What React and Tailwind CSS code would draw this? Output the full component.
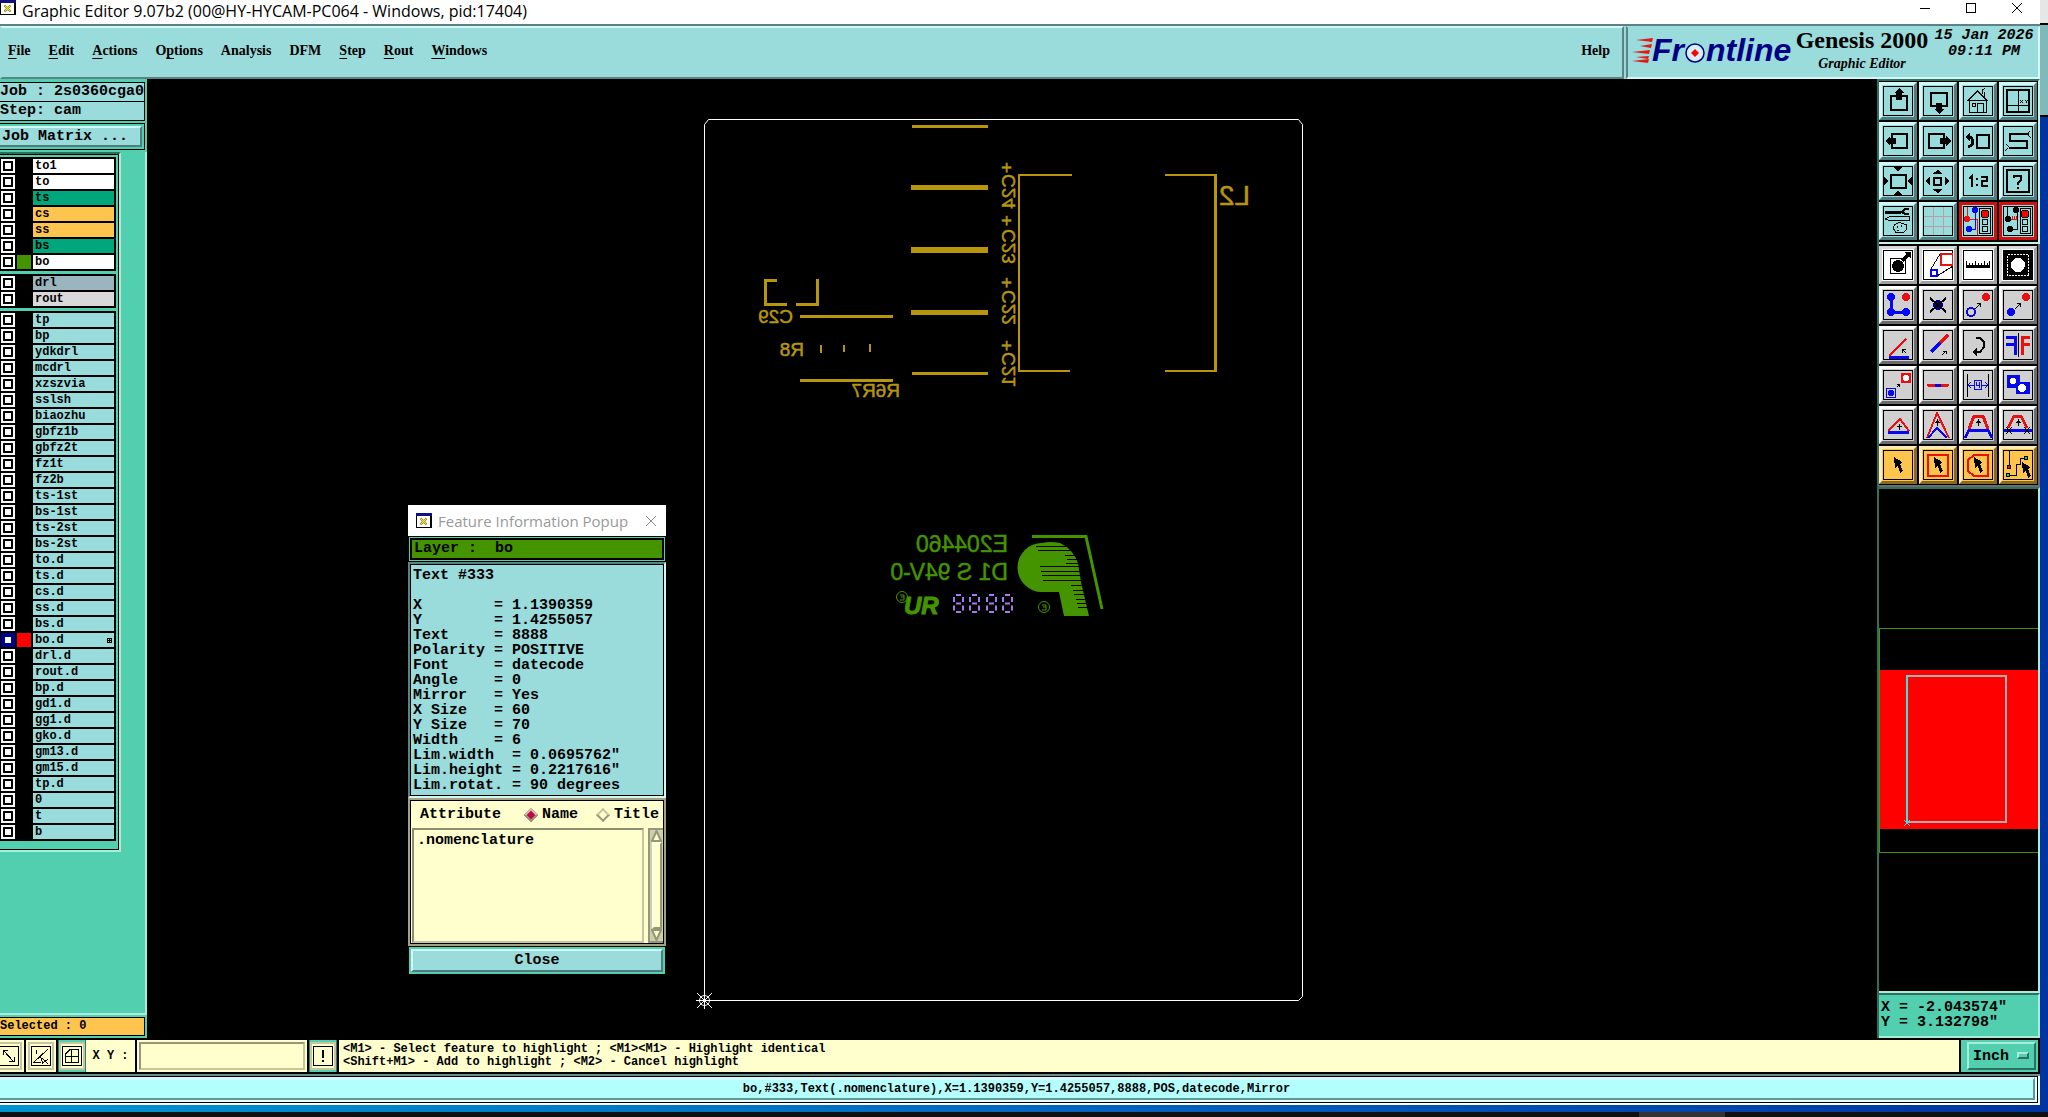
import { useState } from 'react';

const MENUS = [
  { label: 'File', key: 0 },
  { label: 'Edit', key: 0 },
  { label: 'Actions', key: 0 },
  { label: 'Options', key: 1 },
  { label: 'Analysis', key: -1 },
  { label: 'DFM', key: -1 },
  { label: 'Step', key: 0 },
  { label: 'Rout', key: 0 },
  { label: 'Windows', key: 0 },
];

const LAYER_GROUPS = [
  [
    { name: 'to1', bg: 'bg-white' },
    { name: 'to', bg: 'bg-white' },
    { name: 'ts', bg: 'bg-[#00a67c]' },
    { name: 'cs', bg: 'bg-[#fdc54e]' },
    { name: 'ss', bg: 'bg-[#fdc54e]' },
    { name: 'bs', bg: 'bg-[#00a67c]' },
    { name: 'bo', bg: 'bg-white', swatch: 'bg-[#449400]' },
  ],
  [
    { name: 'drl', bg: 'bg-[#9ab5bd]' },
    { name: 'rout', bg: 'bg-[#d9d9d9]' },
  ],
  [
    'tp', 'bp', 'ydkdrl', 'mcdrl', 'xzszvia', 'sslsh', 'biaozhu', 'gbfz1b', 'gbfz2t', 'fz1t', 'fz2b',
    'ts-1st', 'bs-1st', 'ts-2st', 'bs-2st', 'to.d', 'ts.d', 'cs.d', 'ss.d', 'bs.d', 'bo.d', 'drl.d',
    'rout.d', 'bp.d', 'gd1.d', 'gg1.d', 'gko.d', 'gm13.d', 'gm15.d', 'tp.d', '0', 't', 'b',
  ].map((name) => ({
    name,
    bg: 'bg-[#9adbdb]',
    swatch: name === 'bo.d' ? 'bg-[#ff0000]' : undefined,
    work: name === 'bo.d',
  })),
];

const FEATURE_INFO = `Text #333

X        = 1.1390359
Y        = 1.4255057
Text     = 8888
Polarity = POSITIVE
Font     = datecode
Angle    = 0
Mirror   = Yes
X Size   = 60
Y Size   = 70
Width    = 6
Lim.width  = 0.0695762"
Lim.height = 0.2217616"
Lim.rotat. = 90 degrees`;

const RED = '#e81010';
const BLUE = '#0808f0';

const line = (d, color = '#000', w = 1, extra = {}) => (
  <path d={d} fill="none" stroke={color} strokeWidth={w} {...extra} />
);

// Toolbar icons, all on a 30x30 grid
const VIEW_ICONS = [
  ['Pan up', <>
    {line('M8 10H24V24H8Z', '#000', 2)}
    <path d="M16 2L21 7H19V14H13V7H11Z" />
  </>],
  ['Pan down', <>
    {line('M8 7H24V20H8Z', '#000', 2)}
    <path d="M16 28L21 23H19V17H13V23H11Z" />
  </>],
  ['Home', <>
    {line('M4.5 15L14.5 5L24.5 15M6.5 14V26.5H23.5V14M5 14.5H24M19.5 8V4L22 2.5M21.5 11V6M9.5 17.5H12.5V20.5H9.5ZM14.5 26V17.5H20.5V26')}
  </>],
  ['XY window', <>
    {line('M4 4H26V26H4Z', '#000', 2)}
    {line('M15.5 4V26M4 19.5H26')}
    {line('M17 14L20 17M20 14L17 17M22 14L23.5 15.5L25 14M23.5 15.5V17')}
  </>],
  ['Pan left', <>
    {line('M9 8H24V22H9Z', '#000', 2)}
    <path d="M2 15L7 10V12H13V18H7V20Z" />
  </>],
  ['Pan right', <>
    {line('M6 8H21V22H6Z', '#000', 2)}
    <path d="M28 15L23 10V12H17V18H23V20Z" />
  </>],
  ['Previous view', <>
    {line('M14 9H26V22H14Z', '#000', 2)}
    {line('M5 11H8Q11 16 9 19L5 21', '#000', 3)}
    <path d="M2 11L7 7V15Z" />
  </>],
  ['Serpentine', <>
    {line('M26 8H7V15H24V22H6', '#000', 2)}
    {line('M24 8L27 5M25 9L28 12M6 21L3 18M5 22L2 25')}
  </>],
  ['Zoom out', <>
    {line('M8 9H23V22H8Z', '#000', 2)}
    <path d="M15 5L10 1H20ZM15 25L10 29H20ZM5 15L1 10V20ZM25 15L29 10V20Z" />
  </>],
  ['Zoom in', <>
    {line('M11 12H18V19H11Z', '#000', 2)}
    <path d="M15 4L9 8H20ZM15 27L9 23H20ZM3 15L7 10V20ZM26 15L22 10V20Z" />
  </>],
  ['Zoom 1:2', <>{line('M6 13L9 10V21M14 12V14M14 18V20M18 11H24V15H19V20H25', '#000', 2)}</>],
  ['Help on item', <>
    {line('M4 4H26V26H4Z', '#000', 2)}
    {line('M11 12V10H18V14L15 17V19M15 21V23', '#000', 2)}
  </>],
  ['Tools', <>
    {line('M2 6H18', '#000', 3)}
    {line('M26 3H22L19 6L22 8H26', '#000', 2)}
    {line('M2 13L7 10.5H26.5V14.5H7ZM12 18.5L16 16.5L23 18.5L24 23L20 27L13 26.5L10 22Z')}
    {line('M14 20V22M18 19V21M14 24H16')}
  </>],
  ['Grid', <>{line('M10.5 1V29M20.5 1V29M1 10.5H29M1 20.5H29', '#b8a0a8')}</>],
  ['Snap on', <>
    {line('M4.5 1V13.5H14.5V29', RED)}
    {line('M12.5 5V23.5H6', BLUE)}
    <circle cx="4" cy="13" r="3" fill={RED} /><circle cx="12" cy="4" r="3" fill={BLUE} /><circle cx="6" cy="23" r="3" fill={BLUE} />
    {line('M16.5 2.5H27.5V27.5H16.5Z')}
    <circle cx="22" cy="8" r="4" fill="#f00" stroke="#000" /><circle cx="22" cy="16" r="3" fill="none" stroke="#000" /><circle cx="22" cy="23" r="3" fill="none" stroke="#000" />
  </>, true],
  ['Snap off', <>
    {line('M4.5 1V13M14.5 5V23.5H8')}
    {line('M6 13.5H14M9.5 10V13M11.5 10V13M13.5 10V13', RED)}
    <circle cx="5" cy="13" r="3" /><circle cx="13" cy="4" r="3" /><circle cx="7" cy="23" r="3" />
    {line('M17.5 2.5H27.5V27.5H17.5Z')}
    <circle cx="22" cy="8" r="4" fill="#f00" stroke="#000" /><circle cx="22" cy="16" r="3" fill="none" stroke="#000" /><circle cx="22" cy="23" r="3" fill="none" stroke="#000" />
  </>, true],
];

const EDIT_ICONS = [
  ['Move', <>
    {line('M7.5 8.5H22.5V23.5H7.5Z')}
    <circle cx="15" cy="16" r="6" />
    {line('M19 11L25 5', '#000', 3)}
    <path d="M21 2H28V9Z" />
  </>],
  ['Scale', <>
    {line('M17 4L8 19M30 16L14 26', '#000', 1)}
    {line('M18 4H30V15H18Z', RED, 2)}
    {line('M8 20H14V26H8Z', BLUE, 2)}
  </>],
  ['Measure', <>
    <path d="M3 15H27V18H3Z" />
    {line('M3.5 11V15M6.5 13V15M9.5 13V15M12.5 11V15M15.5 13V15M18.5 13V15M21.5 11V15M24.5 13V15M26.5 11V15')}
  </>],
  ['Negative', <>
    <path d="M1 1H29V29H1Z" />
    {line('M4.5 4.5H25.5V25.5H4.5Z', '#fff', 1, { strokeDasharray: '2 1' })}
    <circle cx="15" cy="15" r="7" fill="#fff" />
  </>],
  ['Copy nodes', <>
    {line('M8 7V22H23', BLUE, 3)}
    <circle cx="8" cy="7" r="4" fill={BLUE} /><circle cx="8" cy="22" r="4" fill={BLUE} /><circle cx="23" cy="22" r="4" fill={BLUE} /><circle cx="23" cy="7" r="4" fill={RED} />
  </>],
  ['Delete', <>
    <circle cx="15" cy="15" r="5" fill="#000090" />
    {line('M7 8L23 22M23 8L7 22', '#000', 2)}
  </>],
  ['Move node', <>
    <circle cx="8" cy="22" r="4" fill="none" stroke={BLUE} strokeWidth="2" /><circle cx="23" cy="7" r="4" fill={RED} />
    {line('M12 19L18 13M14 13.5H17.5V17')}
  </>],
  ['Copy node', <>
    <circle cx="8" cy="22" r="4" fill={BLUE} /><circle cx="23" cy="7" r="4" fill={RED} />
    {line('M12 19L18 13M14 13.5H17.5V17')}
  </>],
  ['Rotate', <>
    {line('M6 26L23 9', RED, 2)}
    {line('M6 27H26', BLUE, 3)}
    {line('M19 19L23 23M19.5 23V19.5H23')}
  </>],
  ['Stretch', <>
    {line('M17 13L25 5', RED, 3)}
    {line('M8 22L17 13', BLUE, 3)}
    {line('M19 25L23 21M20 21.5H23.5V24')}
  </>],
  ['Turn', <>
    {line('M13 8H17L21 12V17L17 22H12', '#000', 2)}
    <path d="M9 22L14 18V26Z" />
  </>],
  ['Mirror', <>
    {line('M3 7H12V25M3 14H12', BLUE, 3)}
    {line('M27 7H19V25M27 14H19', RED, 3)}
    {line('M15.5 3V27')}
  </>],
  ['Resize pad', <>
    {line('M3.5 18.5H12.5V27.5H3.5Z', BLUE)}
    <circle cx="8" cy="23" r="3" fill={BLUE} />
    <path d="M18 3H28V13H18Z" fill={RED} /><circle cx="23" cy="8" r="3" fill="#fff" />
    {line('M14 17L17 14M14 14.5H16.5V17')}
  </>],
  ['Break', <>
    {line('M5 15H25', RED, 3, { strokeLinecap: 'round' })}
    {line('M12 15H18', BLUE, 3)}
  </>],
  ['Spacing', <>
    {line('M4.5 4V27M25.5 4V27')}
    {line('M5 15.5H11M8 12L5 15L8 18M19 15.5H25M22 12L25 15L22 18M11.5 10.5H18.5V19.5H11.5ZM13.5 12V15.5H16.5M16.5 12V18', BLUE)}
  </>],
  ['Substitute', <>
    <path d="M4 5H17V12H27V24H13V18H4Z" fill={BLUE} />
    <circle cx="10" cy="11" r="3" fill="#fff" /><circle cx="19" cy="18" r="4" fill="#fff" />
  </>],
  ['Flatten', <>
    {line('M5 21L17 9L26 21', RED, 2)}
    {line('M5 22H26', BLUE, 3)}
    {line('M16.5 20V14M14 16.5H19')}
  </>],
  ['Peak', <>
    {line('M4 28L14 3L26 28', RED, 2)}
    {line('M5 28L14 18L24 28', BLUE, 2)}
    {line('M14.5 16V9M12 12.5H17M13 11.5H16')}
  </>],
  ['Chamfer', <>
    {line('M6 19L11 6H20L25 19', RED, 3)}
    {line('M2 28L6 20H25L29 28', BLUE, 3)}
    {line('M15.5 16V9M13 12.5H18M14 11.5H17')}
  </>],
  ['Extend', <>
    {line('M5 18L11 6H18L24 18', RED, 3)}
    {line('M1 20H29', BLUE, 3)}
    {line('M15.5 16V9M13 12.5H18M14 11.5H17M3 17L9 24M9 17L3 24M21 17L27 24M27 17L21 24')}
  </>],
];

const cursor = (x, y) => (
  <path transform={`translate(${x} ${y})`} d="M0 0L8 5L6 7L9 14L6 16L4 9L1 11Z" />
);

const SELECT_ICONS = [
  ['Select', cursor(11, 7)],
  ['Select frame', <>{line('M5 5H25V26H5Z', RED, 2)}{cursor(11, 7)}</>],
  ['Select polygon', <>{line('M11 5H25V26H11L5 21V10Z', RED, 2)}{cursor(11, 7)}</>],
  ['Select net', <>
    {line('M6.5 1V17M7 25.5H13.5V14.5H17.5V8.5H22')}
    <circle cx="6" cy="17" r="2" fill={RED} stroke="#000" /><circle cx="5" cy="25" r="2" fill="#20e020" stroke="#000" /><circle cx="23" cy="8" r="2" fill="#20e020" stroke="#000" />
    {cursor(19, 12)}
  </>],
];

const TONES = {
  teal: 'bg-[#9adbdb] border-t-[#d4f7f7] border-l-[#d4f7f7] border-b-[#4f7c7e] border-r-[#4f7c7e]',
  white: 'bg-white border-t-[#d8d8d8] border-l-[#d8d8d8] border-b-[#a0a0a0] border-r-[#a0a0a0]',
  gray: 'bg-[#d0d0d0] border-t-white border-l-white border-b-[#6c6c6c] border-r-[#6c6c6c]',
  gold: 'bg-[#fdc54e] border-t-[#ffebb8] border-l-[#ffebb8] border-b-[#8a6a22] border-r-[#8a6a22]',
  red: 'bg-[#9adbdb] border-[#d01010]',
};

function ToolButton({ label, tone, children }) {
  return (
    <button type="button" aria-label={label} className={`flex size-[38px] items-center justify-center border-[3px] ${TONES[tone]}`}>
      <svg viewBox="0 0 30 30" className="size-[30px] shrink-0" shapeRendering="crispEdges">
        <rect x="0.5" y="0.5" width="29" height="29" fill="none" stroke="#000" />
        {children}
      </svg>
    </button>
  );
}

function WindowIcon() {
  return (
    <svg viewBox="0 0 16 15" className="h-[15px] w-4 shrink-0">
      <rect width="16" height="15" fill="#000" />
      <rect x="1" y="3" width="13" height="11" fill="#fff" />
      <rect x="0" y="0" width="16" height="3" fill="#101080" />
      <path d="M4.5 5.5L10.5 11.5M10.5 5.5L4.5 11.5" stroke="#444" strokeWidth="2" />
      <path d="M4.5 5.5L10.5 11.5M10.5 5.5L4.5 11.5" stroke="#f0e020" strokeWidth="1.3" />
    </svg>
  );
}

function TitleBar() {
  return (
    <div className="flex h-6 shrink-0 items-start justify-between bg-white">
      <div className="flex items-start gap-1.5">
        <WindowIcon />
        <h1 className="font-['Open_Sans',sans-serif] text-[16px] leading-[22px] font-normal text-black">
          Graphic Editor 9.07b2 (00@HY-HYCAM-PC064 - Windows, pid:17404)
        </h1>
      </div>
      <div className="flex">
        <button type="button" aria-label="Minimize" className="flex h-[15px] w-[46px] items-center justify-center">
          <svg width="10" height="10"><path d="M0 5.5H10" stroke="#000" /></svg>
        </button>
        <button type="button" aria-label="Maximize" className="flex h-[15px] w-[46px] items-center justify-center">
          <svg width="10" height="10"><rect x="0.5" y="0.5" width="9" height="9" fill="none" stroke="#000" /></svg>
        </button>
        <button type="button" aria-label="Close window" className="flex h-[15px] w-[46px] items-center justify-center">
          <svg width="10" height="10"><path d="M0 0L10 10M10 0L0 10" stroke="#000" /></svg>
        </button>
      </div>
    </div>
  );
}

function MenuBar() {
  return (
    <header className="flex h-[55px] shrink-0 border-t-2 border-[#5b8385] bg-[#9adbdb]">
      <nav className="flex flex-1 items-center justify-between border-2 border-t-[#d4f7f7] border-r-[#5b8385] border-b-[#5b8385] border-l-[#9adbdb] pr-3 pb-1 pl-1.5 font-['Liberation_Serif',serif] text-[14px] leading-[18px] font-bold">
        <div className="flex gap-[18px]">
          {MENUS.map((m) => (
            <button key={m.label} type="button">
              {m.key < 0 ? m.label : (
                <>
                  {m.label.slice(0, m.key)}
                  <span className="underline underline-offset-[3px]">{m.label[m.key]}</span>
                  {m.label.slice(m.key + 1)}
                </>
              )}
            </button>
          ))}
        </div>
        <button type="button">Help</button>
      </nav>
      <div className="ml-[2px] flex w-[414px] border-2 border-t-[#9adbdb] border-r-[#d4f7f7] border-b-[#d4f7f7] border-l-[#5b8385] pl-1">
        <Logo />
        <div className="flex w-[136px] flex-col items-center">
          <div className="font-['Liberation_Serif',serif] text-[24px] leading-6 font-bold whitespace-nowrap">Genesis 2000</div>
          <div className="font-['Liberation_Serif',serif] text-[14px] leading-6 font-bold italic">Graphic Editor</div>
        </div>
        <div className="flex-1 text-center font-['Liberation_Mono',monospace] text-[15px] leading-4 font-bold whitespace-pre italic">
          15 Jan 2026{'\n'}09:11 PM
        </div>
      </div>
    </header>
  );
}

function Logo() {
  return (
    <svg viewBox="0 0 162 48" className="h-12 w-[162px] shrink-0" role="img" aria-label="Frontline">
      <path d="M4 12L21 10L20 14ZM8 18L20 16L19 20ZM0 24L18 22L17 26ZM4 29L17 28L16 31ZM0 33L17 31L16 35Z" fill="#e81818" />
      <g fill="#000084" fontFamily="Liberation Sans, sans-serif" fontSize="32" fontWeight="bold" fontStyle="italic">
        <text x="20" y="33">Fr</text>
        <text x="74" y="33">ntline</text>
      </g>
      <circle cx="63" cy="25" r="9" fill="#d4f0f4" stroke="#000084" strokeWidth="1.5" />
      <path d="M63 21L67 25L63 29L59 25Z" fill="#f00" />
    </svg>
  );
}

function LayerRow({ layer }) {
  return (
    <li className="flex h-[14px] gap-[2px]">
      <label className={`flex size-[14px] items-center justify-center ${layer.work ? 'bg-[#000090]' : 'bg-white'}`}>
        <input
          type="checkbox"
          aria-label={layer.name}
          className={`size-[10px] appearance-none border-2 bg-white ${layer.work ? 'border-[#000090]' : 'border-black'}`}
        />
      </label>
      <span className={`size-[14px] ${layer.swatch || 'bg-black'}`} />
      <button type="button" className={`flex flex-1 items-center justify-between px-[2px] text-left leading-[14px] ${layer.bg}`}>
        {layer.name}
        {layer.work && (
          <svg width="5" height="5" shapeRendering="crispEdges"><path d="M0 .5H5M0 2.5H5M0 4.5H5M.5 0V5M2.5 0V5M4.5 0V5" stroke="#000" /></svg>
        )}
      </button>
    </li>
  );
}

function LayerPanel() {
  return (
    <aside className="flex w-[147px] shrink-0 flex-col bg-[#52cfae] pt-[3px]">
      <div className="mr-[2px] border border-l-0 border-black bg-[#9adbdb] text-[15px] leading-[18px] whitespace-pre">Job : 2s0360cga0</div>
      <div className="mr-[2px] border border-t-0 border-l-0 border-black bg-[#9adbdb] text-[15px] leading-[18px] whitespace-pre">Step: cam</div>
      <div className="mt-[2px] mr-[2px] border border-l-0 border-black py-[2px] pr-[2px]">
        <button type="button" className="block w-full border-2 border-l-0 border-t-[#d4f7f7] border-r-[#4f7c7e] border-b-[#4f7c7e] bg-[#9adbdb] pl-[2px] text-left text-[15px] leading-[17px]">
          Job Matrix ...
        </button>
      </div>
      <div className="mt-[2px] flex flex-1 flex-col border-r-2 border-b-2 border-[#a9ecd9] text-[12px]">
        <div className="mr-[24px] border-t-2 border-r-2 border-b-2 border-t-[#2f6f5d] border-r-[#a9ecd9] border-b-[#a9ecd9]">
          <div className="flex flex-col gap-[3px] border-t border-r border-b border-black pt-[2px] pr-[2px] pb-[8px]">
            {LAYER_GROUPS.map((group, i) => (
              <ul key={i} className="flex flex-col gap-[2px] bg-black py-[2px] pr-[2px] pl-px">
                {group.map((layer) => <LayerRow key={layer.name} layer={layer} />)}
              </ul>
            ))}
          </div>
        </div>
      </div>
      <div className="mt-[2px] mr-[2px] mb-[2px] border border-l-0 border-black bg-[#fdc54e] text-[12px] leading-[17px]">Selected : 0</div>
    </aside>
  );
}

const GOLD = '#b8960c';
const GREEN = '#449400';

// Bottom side text, seen from the top: flipped about its right end
function Flipped({ x, y, size = 19, fill = GOLD, children }) {
  return <text transform={`translate(${x} ${y}) scale(-1 1)`} fontSize={size} fill={fill}>{children}</text>;
}

function Vertical({ x, y, children }) {
  return <text transform={`matrix(0 1 1 0 ${x} ${y})`} fontSize="19" fill={GOLD}>{children}</text>;
}

function Digit({ x }) {
  return (
    <path
      d={`M${x + 3} 595h5M${x + 3} 603.5h5M${x + 3} 612h5M${x + 1} 597v5M${x + 10} 597v5M${x + 1} 605.5v5M${x + 10} 605.5v5`}
      stroke="#a878f0" strokeWidth="2" fill="none"
    />
  );
}

function BoardDrawing() {
  return (
    <svg className="absolute inset-0 size-full" fontFamily="Liberation Sans, sans-serif" fontWeight="normal">
      <g transform="translate(-147 -79)">
        <path d="M704.5 124.5L708.5 119.5H1298.5L1302.5 124.5V996.5L1298.5 1000.5H704.5Z" fill="none" stroke="#fff" />
        <g stroke="#fff" fill="none">
          <circle cx="704.5" cy="1000.5" r="5" />
          <path d="M696 1000.5H713M704.5 992V1009M697 993L712 1008M712 993L697 1008" />
        </g>

        <g stroke={GOLD} fill="none" shapeRendering="crispEdges">
          <path d="M912 126.5H988M912 373.5H988" strokeWidth="3" />
          <path d="M911 187.5H988M911 312.5H988" strokeWidth="5" />
          <path d="M911 250H988" strokeWidth="6" />
          <path d="M1072 175H1019V371H1070" strokeWidth="2" />
          <path d="M1165 175H1215.5M1215.5 371H1165" strokeWidth="2" />
          <path d="M1215.5 174V372" strokeWidth="3" />
          <path d="M777 280.5H765.5V304.5H787M796 304.5H817.5V279" strokeWidth="3" />
          <path d="M800 316.5H893M800 380.5H893" strokeWidth="3" />
          <path d="M821 345V353M844 345V352M870 344V352" strokeWidth="2" />
        </g>
        <g stroke={GOLD} strokeWidth="0.5">
          <Flipped x={793} y={323}>C29</Flipped>
          <Flipped x={804} y={356}>R8</Flipped>
          <Flipped x={900} y={397}>R6R7</Flipped>
          <Flipped x={1250} y={205} size={28}>L2</Flipped>
          {[['C24', 162, 174], ['C23', 215, 229], ['C22', 277, 290], ['C21', 340, 352]].map(([ref, plus, y]) => (
            <g key={ref}>
              <Vertical x={1013} y={plus}>+</Vertical>
              <Vertical x={1015} y={y}>{ref}</Vertical>
            </g>
          ))}
        </g>

        <g stroke={GREEN} strokeWidth="0.5">
          <Flipped x={1008} y={552} size={23} fill={GREEN}>E204460</Flipped>
          <Flipped x={1008} y={580} size={23} fill={GREEN}>D1 S 94V-0</Flipped>
        </g>
        {[953, 969, 986, 1002].map((x) => <Digit key={x} x={x} />)}

        {/* recognized component mark */}
        <text x="904" y="614" fontSize="24" fontWeight="bold" fontStyle="italic" fill={GREEN} stroke={GREEN}>UR</text>
        <g stroke={GREEN} fill="none">
          <circle cx="902" cy="597" r="5.5" />
          <path d="M900 595H904V600H900M904 597H901" />
          <circle cx="1044" cy="607" r="5.5" />
          <path d="M1042 605H1046V610H1042M1046 607H1043" />
        </g>

        {/* Maker logo */}
        <path d="M1042 543Q1050 541 1060 543Q1073 549 1078 563L1081 582L1089 616H1064L1059 592H1042A24.5 24.5 0 0 1 1042 543Z" fill={GREEN} />
        <path d="M1032 536.5H1086L1102 609" fill="none" stroke={GREEN} strokeWidth="3" />
        <path
          d="M1036 546.5H1068M1038 550.5H1072M1065 555.5H1076M1067 559.5H1078M1066 563.5H1079M1040 566.5H1080M1041 571.5H1081M1042 575.5H1081M1043 580.5H1082M1071 585.5H1083M1073 590.5H1085M1074 594.5H1086M1076 599.5H1087M1077 603.5H1087M1078 607.5H1088"
          stroke="#000" fill="none"
        />
      </g>
    </svg>
  );
}

function FeaturePopup() {
  const [show, setShow] = useState('name');
  const radios = [{ id: 'name', label: 'Name' }, { id: 'title', label: 'Title' }];
  return (
    <section className="absolute top-[426px] left-[261px] w-[258px] bg-[#52cfae] text-[15px] leading-[15px]">
      <div className="flex h-[31px] items-center gap-1.5 bg-white px-2">
        <WindowIcon />
        <h2 className="flex-1 font-['Open_Sans',sans-serif] text-[15px] leading-5 font-normal whitespace-nowrap text-[#999]">Feature Information Popup</h2>
        <button type="button" aria-label="Close popup" className="mr-px">
          <svg width="12" height="12"><path d="M1 1L11 11M11 1L1 11" stroke="#888" /></svg>
        </button>
      </div>
      <div className="border border-black p-px">
        <div className="border-2 border-black bg-[#449400] pl-[2px] leading-[18px] whitespace-pre">Layer :  bo</div>
      </div>
      <div className="border-2 border-t-[#5b8385] border-r-[#d4f7f7] border-b-[#d4f7f7] border-l-[#5b8385]">
        <pre className="border border-black bg-[#9adbdb] px-[2px] pt-[3px] pb-[2px] font-['Liberation_Mono',monospace]">{FEATURE_INFO}</pre>
      </div>
      <div className="border-2 border-[#a3a383] bg-[#ffffce]">
        <div className="border border-black">
          <fieldset className="flex h-[27px] items-center pr-1 pl-[9px]">
            <span className="flex-1">Attribute</span>
            {radios.map((r) => (
              <label key={r.id} className="ml-4 flex items-center gap-1.5 last:ml-5">
                <input
                  type="radio"
                  name="show"
                  checked={show === r.id}
                  onChange={() => setShow(r.id)}
                  className="size-[10px] rotate-45 appearance-none border-2 border-t-[#c5c5a0] border-l-[#c5c5a0] border-r-[#96967a] border-b-[#96967a] bg-[#ffffce] checked:bg-[#c8004c]"
                />
                {r.label}
              </label>
            ))}
          </fieldset>
          <div className="flex h-[115px]">
            <ul className="ml-px flex-1 border-2 border-t-[#8d8d6f] border-r-[#c5c5a0] border-b-[#c5c5a0] border-l-[#8d8d6f] px-[3px] py-[3px]">
              <li>.nomenclature</li>
            </ul>
            <div className="ml-1 flex w-[15px] flex-col items-center justify-between border-2 border-r-0 border-[#96967a] bg-[#cfcfa8]">
              <svg width="11" height="12"><path d="M5.5 1L10 11H1Z" fill="#ffffce" stroke="#96967a" strokeWidth="2" /></svg>
              <div className="w-[10px] flex-1 border-2 border-[#ffffe8] border-r-[#96967a] border-b-[#96967a] bg-[#ffffce]" />
              <svg width="11" height="12"><path d="M5.5 11L10 1H1Z" fill="#ffffce" stroke="#96967a" strokeWidth="2" /></svg>
            </div>
          </div>
        </div>
      </div>
      <div className="border border-black p-[2px]">
        <button type="button" className="block w-full border-2 border-t-[#d4f7f7] border-r-[#4f7c7e] border-b-[#4f7c7e] border-l-[#d4f7f7] bg-[#9adbdb] leading-[19px]">
          Close
        </button>
      </div>
    </section>
  );
}

function Toolbar() {
  return (
    <aside className="flex w-[163px] shrink-0 flex-col border-l-2 border-[#2f6f5d]">
      <div className="border-t-2 border-r-2 border-b-2 border-t-[#2f6f5d] border-r-[#c5f3e8] border-b-[#c5f3e8]">
        <div className="grid grid-cols-[repeat(4,38px)] gap-[2px] bg-black pt-px pb-[2px]">
          {VIEW_ICONS.map(([label, icon, armed]) => (
            <ToolButton key={label} label={label} tone={armed ? 'red' : 'teal'}>{icon}</ToolButton>
          ))}
        </div>
      </div>
      <div className="border-r-2 border-b-2 border-[#6c6c6c]">
        <div className="grid grid-cols-[repeat(4,38px)] gap-[2px] bg-black pt-[2px] pb-px">
          {EDIT_ICONS.map(([label, icon], i) => (
            <ToolButton key={label} label={label} tone={i < 4 ? 'white' : 'gray'}>{icon}</ToolButton>
          ))}
          {SELECT_ICONS.map(([label, icon]) => (
            <ToolButton key={label} label={label} tone="gold">{icon}</ToolButton>
          ))}
        </div>
      </div>
      <Overview />
      <div className="border-t-2 border-r-2 border-b-2 border-t-[#2f6f5d] border-r-[#a9ecd9] border-b-[#a9ecd9] bg-[#52cfae] px-[2px] pt-[5px] pb-[6px] text-[15px] leading-[15px] whitespace-pre">
        X = -2.043574"{'\n'}Y = 3.132798"
      </div>
    </aside>
  );
}

function Overview() {
  return (
    <div className="relative min-h-0 flex-1 border-t-2 border-r-2 border-b-2 border-t-[#2f6f5d] border-r-[#a9ecd9] border-b-[#a9ecd9] bg-black">
      <svg className="absolute inset-0 size-full" shapeRendering="crispEdges">
        <rect x="0" y="181" width="160" height="159" fill="#ff0000" />
        <path d="M160 139.5H.5V363.5H160" fill="none" stroke="#449400" />
        <rect x="28" y="187" width="99" height="146" fill="none" stroke="#a8b0b0" strokeWidth="2" />
        <path d="M28 186V334" stroke="#40e0e0" strokeWidth="2" />
        <path d="M25 331L31 337M31 331L25 337" stroke="#40e0e0" />
      </svg>
    </div>
  );
}

function BarButton({ label, active, children }) {
  return (
    <div className={active ? 'border-x border-[#2f7f69] bg-[#52cfae] py-[2px]' : 'border-r-2 border-black p-[2px]'}>
      <button type="button" aria-label={label} className="flex h-full items-center justify-center border-2 border-[#c5c5a0] bg-[#ffffce] px-px">
        <svg width="20" height="20" shapeRendering="crispEdges" fill="none" stroke="#000">
          <rect x="0.5" y="0.5" width="19" height="19" />
          {children}
        </svg>
      </button>
    </div>
  );
}

function CommandBar() {
  return (
    <div className="-ml-1.5 flex h-[34px] shrink-0 border-b-2 border-black bg-[#ffffce]">
      <BarButton label="Absolute"><path d="M4 4L15 16M4.5 9V4.5H9M15.5 11V15.5H10" /></BarButton>
      <BarButton label="Angle"><path d="M2 17L17 3M3 16.5H10M5.5 4V8M11 12L17 18M12 17L17 13M8 10Q12 13 11 18" /></BarButton>
      <BarButton label="Grid snap" active><path d="M3.5 8L8 3.5H16.5V16.5H3.5ZM9.5 3V17M3 10.5H17" /></BarButton>
      <label htmlFor="xy" className="flex w-[49px] items-center justify-center text-[12px] whitespace-pre">X Y :</label>
      <div className="border-x-2 border-black p-[2px]">
        <input id="xy" type="text" className="h-full w-[166px] border-2 border-t-[#96967a] border-r-[#c5c5a0] border-b-[#c5c5a0] border-l-[#96967a] bg-[#ffffce] px-1 outline-none" />
      </div>
      <BarButton label="Alert" active><path d="M10 4V12M10 14V16" strokeWidth="2" /></BarButton>
      <div className="flex-1 border-l-2 border-black pt-[3px] pl-1 text-[12px] leading-[13px] whitespace-pre">
        {'<M1> - Select feature to highlight ; <M1><M1> - Highlight identical\n<Shift+M1> - Add to highlight ; <M2> - Cancel highlight'}
      </div>
      <div className="border-x-2 border-black bg-[#52cfae] py-[2px] pr-[2px] pl-1.5">
        <div className="relative h-full w-[69px] border-2 border-t-[#a9ecd9] border-r-[#2f6f5d] border-b-[#2f6f5d] border-l-[#a9ecd9]">
          <select aria-label="Units" className="size-full appearance-none pl-1 text-[15px] leading-6 outline-none">
            <option>Inch</option>
            <option>MM</option>
          </select>
          <span className="pointer-events-none absolute top-2 right-[5px] h-[7px] w-3 border-2 border-t-[#a9ecd9] border-r-[#2f6f5d] border-b-[#2f6f5d] border-l-[#a9ecd9]" />
        </div>
      </div>
    </div>
  );
}

export default function App() {
  return (
    <div className="flex h-screen flex-col overflow-hidden bg-[#101012] font-['Liberation_Mono',monospace] font-bold text-black">
      <div className="flex min-h-0 flex-1">
        <div className="flex min-w-0 flex-1 flex-col">
          <TitleBar />
          <MenuBar />
          <main className="flex min-h-0 flex-1 bg-black pb-[2px]">
            <LayerPanel />
            <div className="relative min-w-0 flex-1 overflow-hidden bg-black">
              <BoardDrawing />
              <FeaturePopup />
            </div>
            <Toolbar />
          </main>
          <CommandBar />
          <footer className="shrink-0 border-y-2 border-t-[#6b8f8c] border-b-white bg-[#e8ffff] pr-[2px]">
            <div className="border-y border-r border-black pr-[2px] pb-[2px]">
              <div className="border-t-[3px] border-r-2 border-b-2 border-t-[#d4fcfc] border-r-[#5f9896] border-b-[#5f9896] bg-[#b4fefe] text-center text-[12px] leading-[18px]">
                bo,#333,Text(.nomenclature),X=1.1390359,Y=1.4255057,8888,POS,datecode,Mirror
              </div>
            </div>
          </footer>
        </div>
        {/* sliver of the window and desktop behind */}
        <div className="flex w-2 shrink-0 flex-col bg-[#0034a0]">
          <div className="h-[23px] bg-[#e6e6e6]" />
          <div className="h-[94px] border-y-2 border-black bg-[#7fb9b9]" />
        </div>
      </div>
      <div className="h-[7px] shrink-0 bg-linear-to-r from-[#0095d0] via-[#0068c0] to-[#0034a0]" />
      <div className="flex h-[5px] shrink-0 justify-end">
        <div className="mr-[323px] w-[86px] bg-[#333]" />
      </div>
    </div>
  );
}
